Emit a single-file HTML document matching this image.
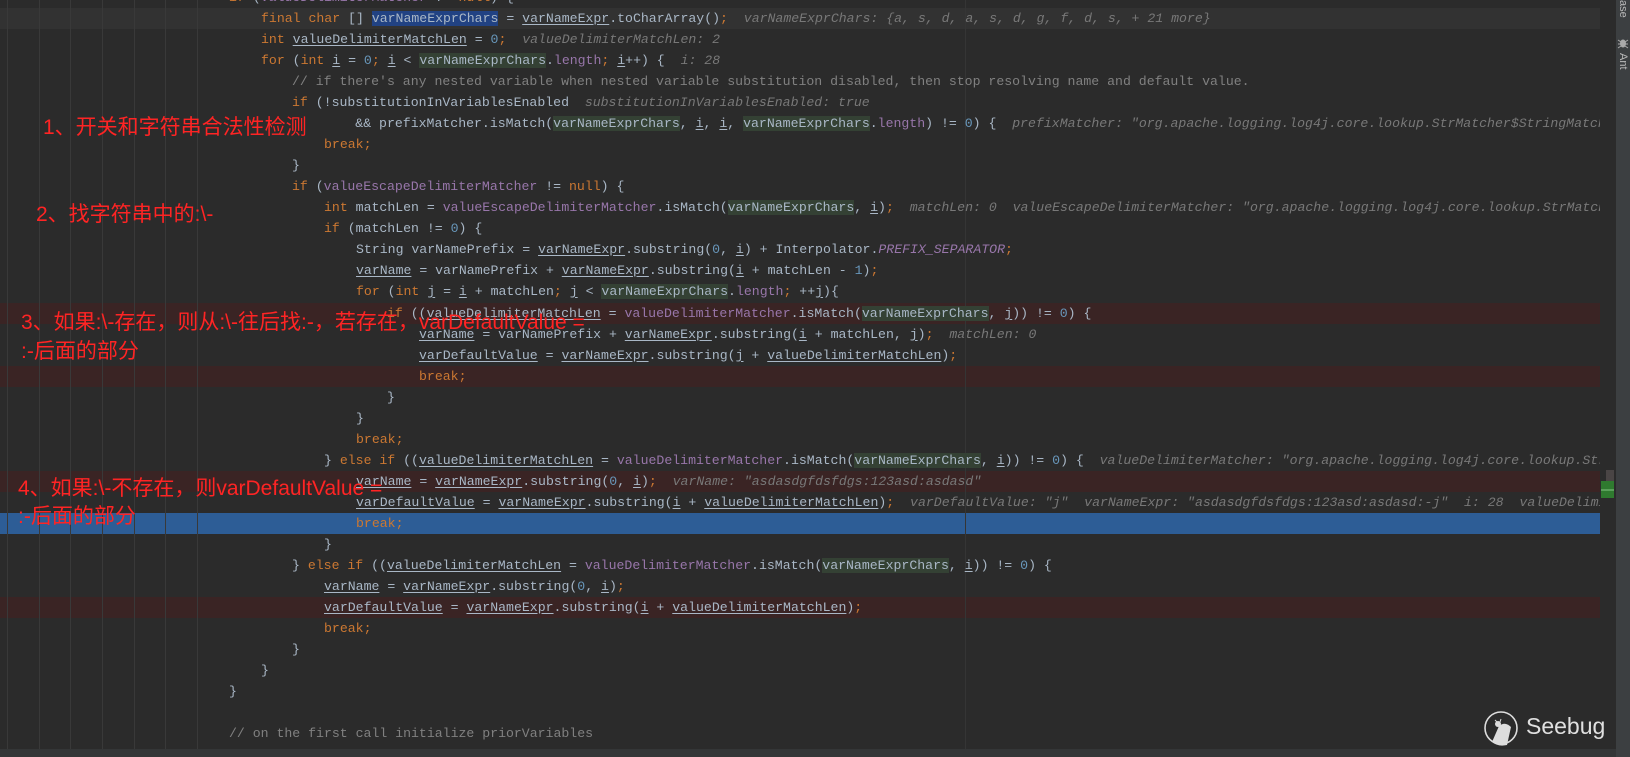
<!DOCTYPE html>
<html><head><meta charset="utf-8"><style>
html,body{margin:0;padding:0;}
body{width:1630px;height:757px;background:#2b2b2b;overflow:hidden;position:relative;font-family:"Liberation Mono",monospace;}
.row{position:absolute;left:0;width:1600px;height:21px;}
.ln{position:absolute;height:21px;line-height:21px;font-size:13.2px;color:#a9b7c6;white-space:pre;}
.k{color:#cc7832}.u{text-decoration:underline;text-decoration-color:#a9b7c6;text-underline-offset:2px}
.h{color:#787878;font-style:italic}.g{background:#344134}.f{color:#9876aa}.fi{color:#9876aa;font-style:italic}
.n{color:#6897bb}.c{color:#808080}.sel{background:#214283}
.guide{position:absolute;top:0;width:1px;height:750px;background:#393939}
.ann{position:absolute;color:#ff2424;font-family:"Liberation Sans","Noto Sans CJK SC",sans-serif;font-size:21px;white-space:nowrap;line-height:28px}
</style></head><body>
<div class="row" style="top:8px;background:#323232"></div>
<div class="row" style="top:303px;background:#3a2424"></div>
<div class="row" style="top:366px;background:#3a2424"></div>
<div class="row" style="top:471px;background:#3a2424"></div>
<div class="row" style="top:597px;background:#3a2424"></div>
<div class="row" style="top:513px;background:#2d5d96"></div>
<div class="guide" style="left:7px"></div><div class="guide" style="left:39px"></div><div class="guide" style="left:70px"></div><div class="guide" style="left:102px"></div><div class="guide" style="left:134px"></div><div class="guide" style="left:165px"></div><div class="guide" style="left:197px"></div>
<div class="guide" style="left:965px;background:#353535"></div>

<div style="position:absolute;left:0;top:0;width:1600px;height:757px;overflow:hidden">
<div class="ln" style="top:-13px;left:229px"><span class="k">if</span> (<span class="f">valueDelimiterMatcher</span> != <span class="k">null</span>) {</div>
<div class="ln" style="top:8px;left:261px"><span class="k">final char</span> [] <span class="sel">varNameExprChars</span> = <span class="u">varNameExpr</span>.toCharArray()<span class="k">;</span>  <span class="h">varNameExprChars: {a, s, d, a, s, d, g, f, d, s, + 21 more}</span></div>
<div class="ln" style="top:29px;left:261px"><span class="k">int</span> <span class="u">valueDelimiterMatchLen</span> = <span class="n">0</span><span class="k">;</span>  <span class="h">valueDelimiterMatchLen: 2</span></div>
<div class="ln" style="top:50px;left:261px"><span class="k">for</span> (<span class="k">int</span> <span class="u">i</span> = <span class="n">0</span><span class="k">;</span> <span class="u">i</span> &lt; <span class="g">varNameExprChars</span>.<span class="f">length</span><span class="k">;</span> <span class="u">i</span>++) {  <span class="h">i: 28</span></div>
<div class="ln" style="top:71px;left:292px"><span class="c">// if there's any nested variable when nested variable substitution disabled, then stop resolving name and default value.</span></div>
<div class="ln" style="top:92px;left:292px"><span class="k">if</span> (!substitutionInVariablesEnabled  <span class="h">substitutionInVariablesEnabled: true</span></div>
<div class="ln" style="top:113px;left:292px">        &amp;&amp; prefixMatcher.isMatch(<span class="g">varNameExprChars</span>, <span class="u">i</span>, <span class="u">i</span>, <span class="g">varNameExprChars</span>.<span class="f">length</span>) != <span class="n">0</span>) {  <span class="h">prefixMatcher: "org.apache.logging.log4j.core.lookup.StrMatcher$StringMatcher@1a2b"</span></div>
<div class="ln" style="top:134px;left:324px"><span class="k">break;</span></div>
<div class="ln" style="top:155px;left:292px">}</div>
<div class="ln" style="top:176px;left:292px"><span class="k">if</span> (<span class="f">valueEscapeDelimiterMatcher</span> != <span class="k">null</span>) {</div>
<div class="ln" style="top:197px;left:324px"><span class="k">int</span> matchLen = <span class="f">valueEscapeDelimiterMatcher</span>.isMatch(<span class="g">varNameExprChars</span>, <span class="u">i</span>)<span class="k">;</span>  <span class="h">matchLen: 0  valueEscapeDelimiterMatcher: "org.apache.logging.log4j.core.lookup.StrMatcher$Str</span></div>
<div class="ln" style="top:218px;left:324px"><span class="k">if</span> (matchLen != <span class="n">0</span>) {</div>
<div class="ln" style="top:239px;left:356px">String varNamePrefix = <span class="u">varNameExpr</span>.substring(<span class="n">0</span>, <span class="u">i</span>) + Interpolator.<span class="fi">PREFIX_SEPARATOR</span><span class="k">;</span></div>
<div class="ln" style="top:260px;left:356px"><span class="u">varName</span> = varNamePrefix + <span class="u">varNameExpr</span>.substring(<span class="u">i</span> + matchLen - <span class="n">1</span>)<span class="k">;</span></div>
<div class="ln" style="top:281px;left:356px"><span class="k">for</span> (<span class="k">int</span> <span class="u">j</span> = <span class="u">i</span> + matchLen<span class="k">;</span> <span class="u">j</span> &lt; <span class="g">varNameExprChars</span>.<span class="f">length</span><span class="k">;</span> ++<span class="u">j</span>){</div>
<div class="ln" style="top:303px;left:387px"><span class="k">if</span> ((<span class="u">valueDelimiterMatchLen</span> = <span class="f">valueDelimiterMatcher</span>.isMatch(<span class="g">varNameExprChars</span>, <span class="u">j</span>)) != <span class="n">0</span>) {</div>
<div class="ln" style="top:324px;left:419px"><span class="u">varName</span> = varNamePrefix + <span class="u">varNameExpr</span>.substring(<span class="u">i</span> + matchLen, <span class="u">j</span>)<span class="k">;</span>  <span class="h">matchLen: 0</span></div>
<div class="ln" style="top:345px;left:419px"><span class="u">varDefaultValue</span> = <span class="u">varNameExpr</span>.substring(<span class="u">j</span> + <span class="u">valueDelimiterMatchLen</span>)<span class="k">;</span></div>
<div class="ln" style="top:366px;left:419px"><span class="k">break;</span></div>
<div class="ln" style="top:387px;left:387px">}</div>
<div class="ln" style="top:408px;left:356px">}</div>
<div class="ln" style="top:429px;left:356px"><span class="k">break;</span></div>
<div class="ln" style="top:450px;left:324px">} <span class="k">else if</span> ((<span class="u">valueDelimiterMatchLen</span> = <span class="f">valueDelimiterMatcher</span>.isMatch(<span class="g">varNameExprChars</span>, <span class="u">i</span>)) != <span class="n">0</span>) {  <span class="h">valueDelimiterMatcher: "org.apache.logging.log4j.core.lookup.StrMatcher</span></div>
<div class="ln" style="top:471px;left:356px"><span class="u">varName</span> = <span class="u">varNameExpr</span>.substring(<span class="n">0</span>, <span class="u">i</span>)<span class="k">;</span>  <span class="h">varName: "asdasdgfdsfdgs:123asd:asdasd"</span></div>
<div class="ln" style="top:492px;left:356px"><span class="u">varDefaultValue</span> = <span class="u">varNameExpr</span>.substring(<span class="u">i</span> + <span class="u">valueDelimiterMatchLen</span>)<span class="k">;</span>  <span class="h">varDefaultValue: "j"  varNameExpr: "asdasdgfdsfdgs:123asd:asdasd:-j"  i: 28  valueDelimiterMatchLen</span></div>
<div class="ln" style="top:513px;left:356px"><span class="k">break;</span></div>
<div class="ln" style="top:534px;left:324px">}</div>
<div class="ln" style="top:555px;left:292px">} <span class="k">else if</span> ((<span class="u">valueDelimiterMatchLen</span> = <span class="f">valueDelimiterMatcher</span>.isMatch(<span class="g">varNameExprChars</span>, <span class="u">i</span>)) != <span class="n">0</span>) {</div>
<div class="ln" style="top:576px;left:324px"><span class="u">varName</span> = <span class="u">varNameExpr</span>.substring(<span class="n">0</span>, <span class="u">i</span>)<span class="k">;</span></div>
<div class="ln" style="top:597px;left:324px"><span class="u">varDefaultValue</span> = <span class="u">varNameExpr</span>.substring(<span class="u">i</span> + <span class="u">valueDelimiterMatchLen</span>)<span class="k">;</span></div>
<div class="ln" style="top:618px;left:324px"><span class="k">break;</span></div>
<div class="ln" style="top:639px;left:292px">}</div>
<div class="ln" style="top:660px;left:261px">}</div>
<div class="ln" style="top:681px;left:229px">}</div>
<div class="ln" style="top:723px;left:229px"><span class="c">// on the first call initialize priorVariables</span></div>
</div>

<div class="ann" style="left:43px;top:114px">1、开关和字符串合法性检测</div>
<div class="ann" style="left:36px;top:201px">2、找字符串中的:\-</div>
<div class="ann" style="left:21px;top:309px">3、如果:\-存在，则从:\-往后找:-，若存在，varDefaultValue =</div>
<div class="ann" style="left:21px;top:338px">:-后面的部分</div>
<div class="ann" style="left:18px;top:475px">4、如果:\-不存在，则varDefaultValue =</div>
<div class="ann" style="left:18px;top:503px">:-后面的部分</div>

<!-- scrollbar markers -->
<div style="position:absolute;left:1606px;top:470px;width:8px;height:12px;background:#4a4545"></div>
<div style="position:absolute;left:1601px;top:481px;width:13px;height:17px;background:#2f7a2f"></div>
<div style="position:absolute;left:1601px;top:489px;width:13px;height:2px;background:#5aa05a"></div>
<!-- bottom scrollbar -->
<div style="position:absolute;left:0;top:749px;width:1616px;height:8px;background:#343637"></div>
<!-- right strip -->
<div style="position:absolute;left:1616px;top:0;width:14px;height:757px;background:#3c3f41"></div>
<div style="position:absolute;left:1617px;top:0;color:#bbb;font-family:'Liberation Sans',sans-serif;font-size:11px;writing-mode:vertical-rl;">ase</div>
<svg style="position:absolute;left:1617px;top:37px" width="12" height="12" viewBox="0 0 12 12"><ellipse cx="6" cy="6.5" rx="3" ry="4" fill="#aaa"/><path d="M1 3l3 2M11 3l-3 2M1 7h3M11 7H8M1 11l3-2M11 11l-3-2" stroke="#aaa"/></svg>
<div style="position:absolute;left:1617px;top:53px;color:#bbb;font-family:'Liberation Sans',sans-serif;font-size:11px;writing-mode:vertical-rl;">Ant</div>
<!-- Seebug logo -->
<svg style="position:absolute;left:1483px;top:709px" width="40" height="40" viewBox="0 0 40 40"><circle cx="18" cy="19" r="16" fill="none" stroke="#ddd" stroke-width="1.6"/><path d="M9 33 L16 17 Q22 12 28 18 L24 36 Q15 38 9 33Z" fill="#ddd"/><circle cx="15" cy="15" r="3" fill="#ddd"/><path d="M12 11l2 2M18 10l-1 3" stroke="#ddd"/></svg>
<div style="position:absolute;left:1526px;top:713px;color:#e0e0e0;font-family:'Liberation Sans',sans-serif;font-size:23px;">Seebug</div>
</body></html>
